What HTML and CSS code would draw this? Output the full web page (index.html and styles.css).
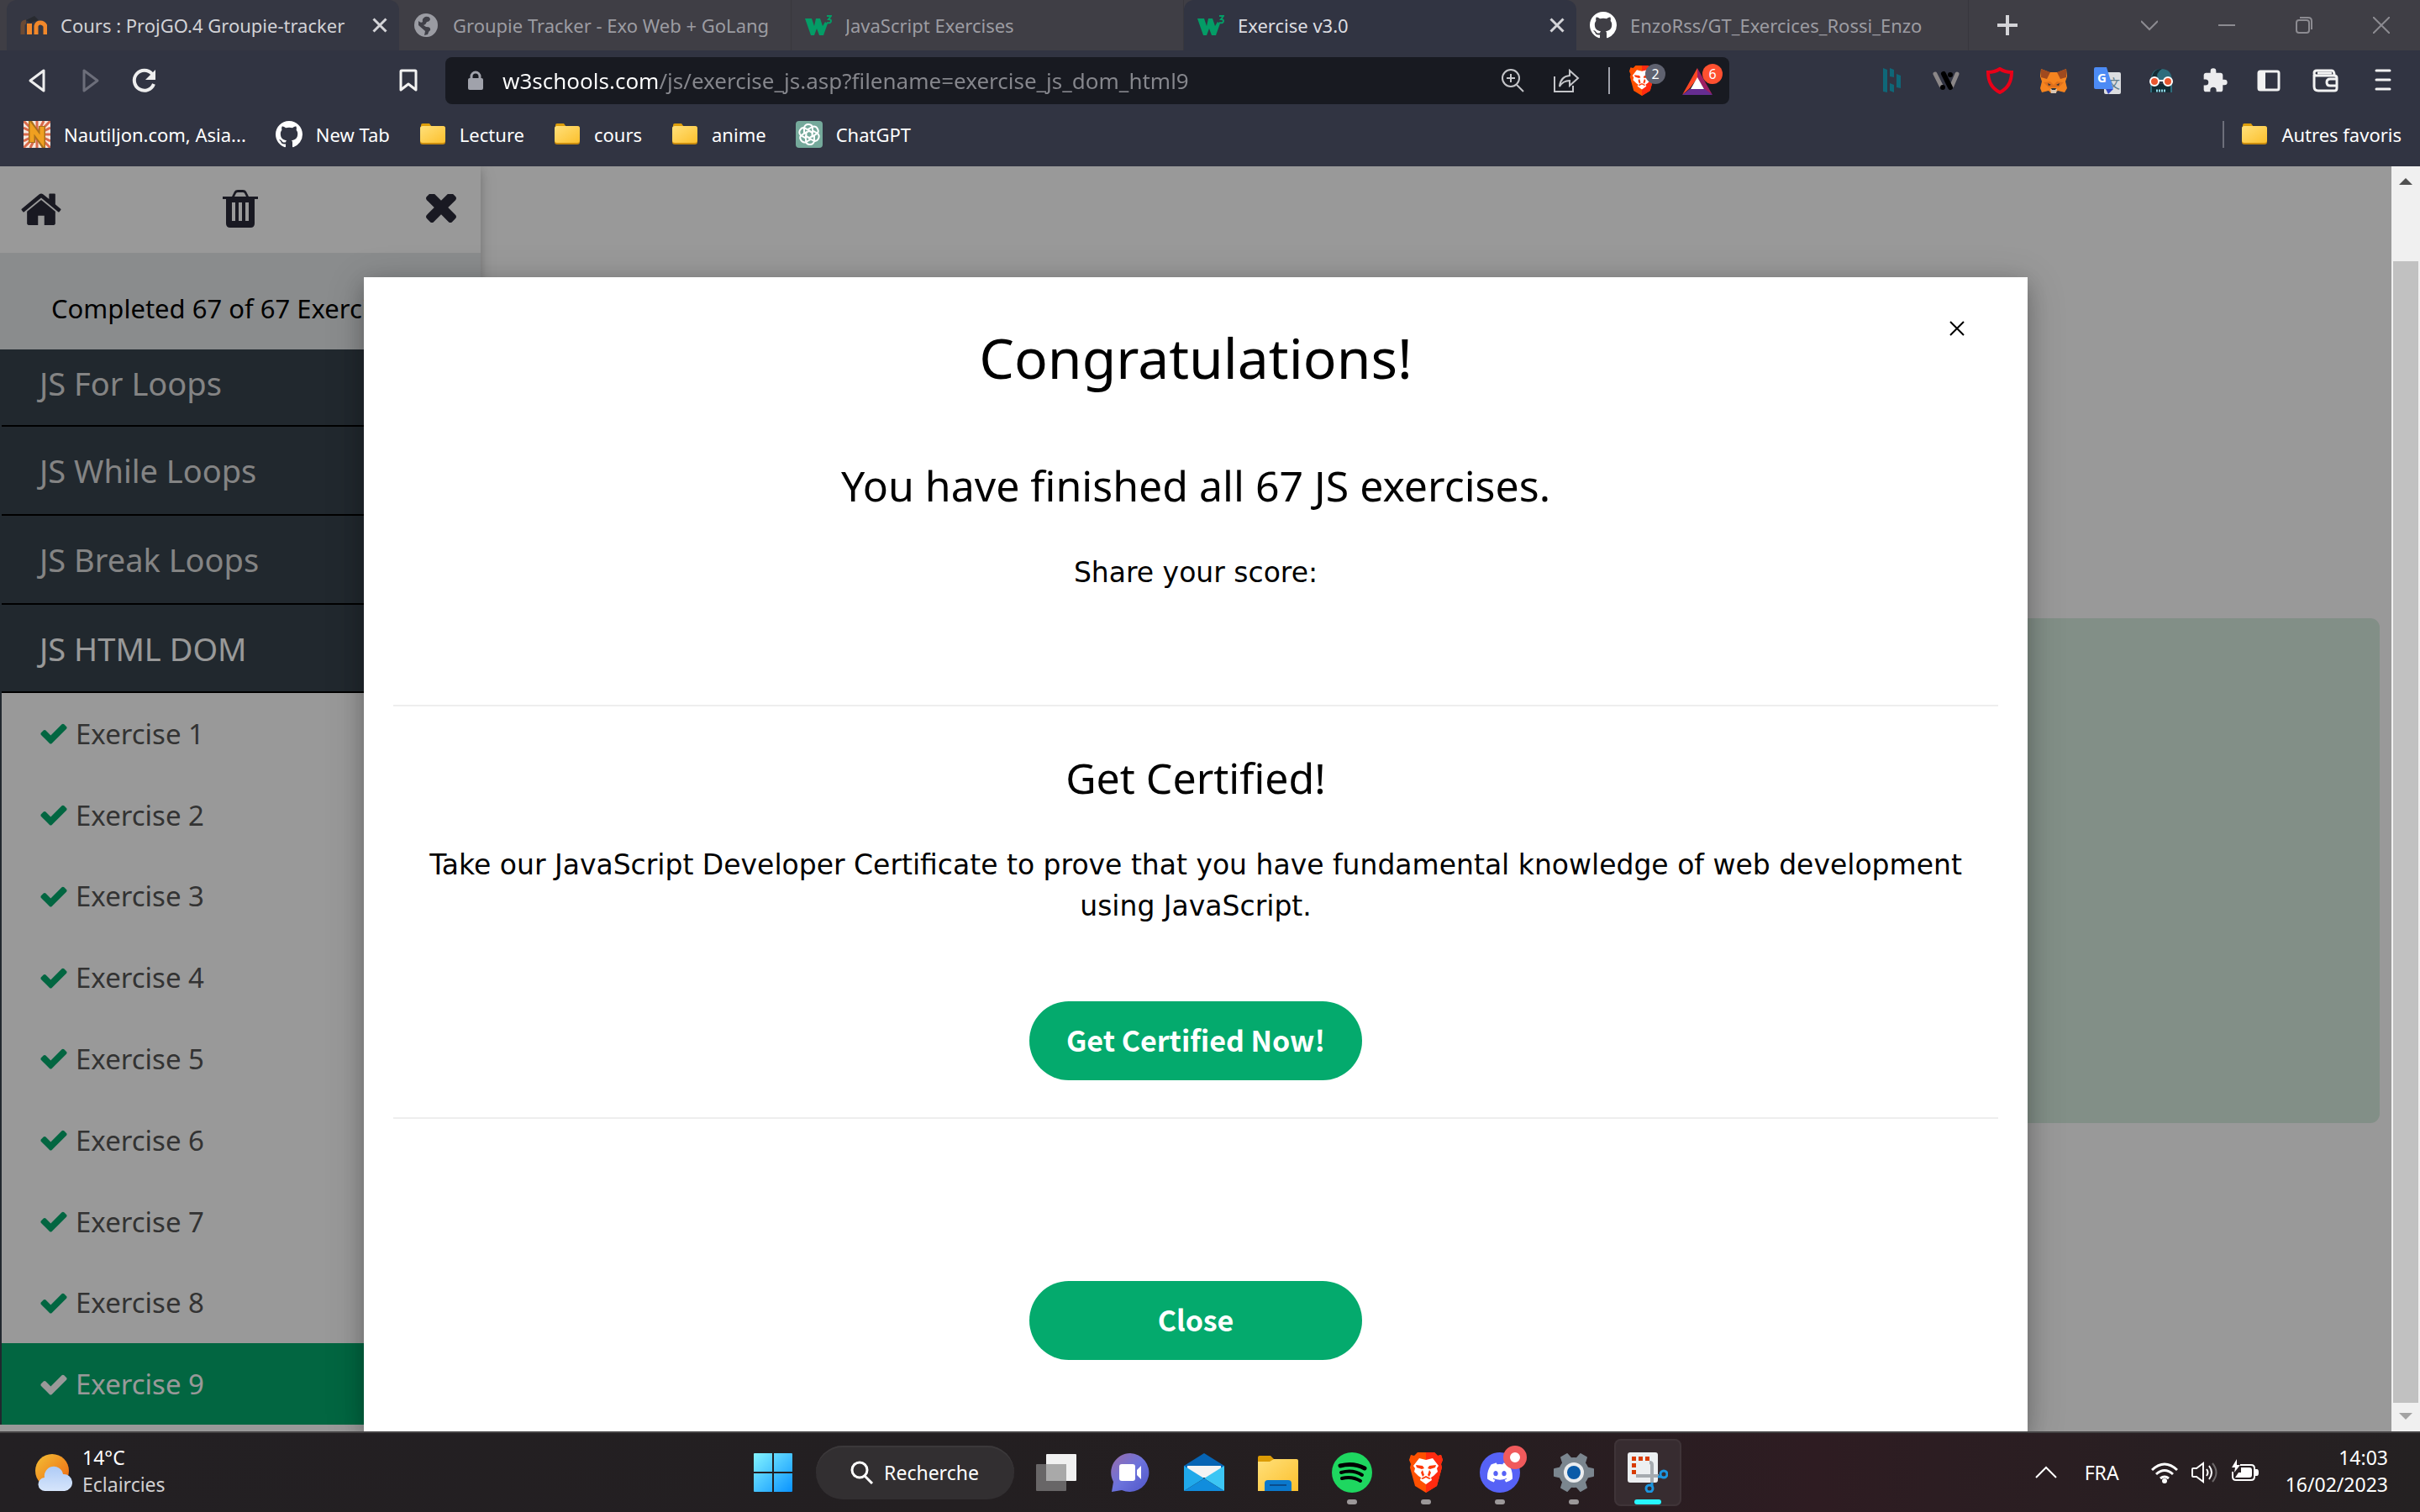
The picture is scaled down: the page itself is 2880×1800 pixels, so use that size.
FILE: index.html
```html
<!DOCTYPE html>
<html lang="en">
<head>
<meta charset="utf-8">
<title>Exercise v3.0</title>
<meta name="viewport" content="width=device-width, initial-scale=1">
<link rel="stylesheet" href="styles.css">
</head>
<body>
<svg class="sprite" aria-hidden="true">
  <defs>
    <linearGradient id="g-folder" x1="0" y1="0" x2="1" y2="1"><stop offset="0" stop-color="#ffe07a"/><stop offset="1" stop-color="#fcc02d"/></linearGradient>
  </defs>
  <symbol id="github" viewBox="0 0 16 16"><path fill="#fff" d="M8 0C3.58 0 0 3.58 0 8c0 3.54 2.29 6.53 5.47 7.59.4.07.55-.17.55-.38 0-.19-.01-.82-.01-1.49-2.01.37-2.53-.49-2.69-.94-.09-.23-.48-.94-.82-1.13-.28-.15-.68-.52-.01-.53.63-.01 1.08.58 1.23.82.72 1.21 1.87.87 2.33.66.07-.52.28-.87.51-1.07-1.78-.2-3.64-.89-3.64-3.95 0-.87.31-1.59.82-2.15-.08-.2-.36-1.02.08-2.12 0 0 .67-.21 2.2.82.64-.18 1.32-.27 2-.27s1.36.09 2 .27c1.53-1.04 2.2-.82 2.2-.82.44 1.1.16 1.92.08 2.12.51.56.82 1.27.82 2.15 0 3.07-1.87 3.75-3.65 3.95.29.25.54.73.54 1.48 0 1.07-.01 1.93-.01 2.2 0 .21.15.46.55.38A8.01 8.01 0 0 0 16 8c0-4.42-3.58-8-8-8z"/></symbol>
  <symbol id="folder" viewBox="0 0 32 32"><path fill="#dc9d0a" d="M2 5q0-2 2-2h8l3 4h-2v6H2z"/><rect x="1" y="6" width="30" height="22" rx="3" fill="#c98c10"/><rect x="1" y="6" width="30" height="20" rx="3" fill="url(#g-folder)"/></symbol>
  <symbol id="w3" viewBox="0 0 32 32"><path fill="#049c66" d="M0 8h8l3 9 2-9h5l3 9 3-5 3 2-5 14h-5l-3-8-3 8H7z"/><path fill="none" stroke="#049c66" stroke-width="2" d="M26 5h5l-3 4q3 0 3 2 0 3-5 2"/></symbol>
  <symbol id="cross" viewBox="0 0 18 18"><path d="M1.500 1.500l15 15m0-15l-15 15" fill="none" stroke="currentColor" stroke-width="3"/></symbol>
  <symbol id="check" viewBox="0 0 1792 1792"><path fill="currentColor" d="M1671 566q0 40-28 68l-724 724-136 136q-28 28-68 28t-68-28l-136-136-362-362q-28-28-28-68t28-68l136-136q28-28 68-28t68 28l294 295 656-657q28-28 68-28t68 28l136 136q28 28 28 68z"/></symbol>
  <symbol id="lion" viewBox="0 0 40 48"><path fill="#ff5000" d="M10 0h20l4 4 4-1 2 6-2 5 1 4-6 22-13 8-13-8L1 18l1-4-2-5 2-6 4 1z"/><path fill="#ff2a10" d="M20 0h10l4 4 4-1 2 6-2 5 1 4-6 22-13 8z"/><path fill="#fff" d="M12 7l8 2 8-2 7 9-2 3 1 4-5 5-3 2 1 3-7 5-7-5 1-3-3-2-5-5 1-4-2-3z"/><path fill="#ff3a08" d="M8 15l8 1 2 3-3 1-6-2zM32 15l-8 1-2 3 3 1 6-2zM14 24l2-3 2 6-2 2zM26 24l-2-3-2 6 2 2zM14 31l6-3 6 3-2 1-4-2-4 2z"/></symbol>
</svg>

<header class="browser">
  <div class="tabstrip" role="tablist">
    <div class="tab tab-hover" role="tab">
      <svg class="i32" viewBox="0 0 32 32"><path d="M3 27V16q0-4 4-4" fill="none" stroke="#6b4a35" stroke-width="5"/><path d="M11 27V14" stroke="#f2882a" stroke-width="6"/><path d="M19 27V17q1-4 5-4t6 4v10" fill="none" stroke="#f2882a" stroke-width="5"/><path d="M7 10l10-5 5 5-10 3z" fill="#282a30"/></svg>
      <span class="tab-title">Cours : ProjGO.4 Groupie-tracker</span>
      <button class="tab-close" aria-label="Close tab"><svg class="i18"><use href="#cross"/></svg></button>
    </div>
    <div class="tab" role="tab">
      <svg class="i32" viewBox="0 0 32 32"><circle cx="16" cy="16" r="14" fill="#9b9ca3"/><path fill="#3f3f47" d="M15 6q5-1 6 3-1 3-4 3-1 3-4 4l3 2q6 0 5 4-2 1-3 5l-4 1 1-5-8-7V11q3 3 5 1-1-4 3-6z"/></svg>
      <span class="tab-title">Groupie Tracker - Exo Web + GoLang</span>
    </div>
    <div class="tab" role="tab">
      <svg class="i32"><use href="#w3"/></svg>
      <span class="tab-title">JavaScript Exercises</span>
    </div>
    <div class="tab tab-active" role="tab" aria-selected="true">
      <svg class="i32"><use href="#w3"/></svg>
      <span class="tab-title">Exercise v3.0</span>
      <button class="tab-close" aria-label="Close tab"><svg class="i18"><use href="#cross"/></svg></button>
    </div>
    <div class="tab" role="tab">
      <svg class="i32"><use href="#github"/></svg>
      <span class="tab-title">EnzoRss/GT_Exercices_Rossi_Enzo</span>
    </div>
    <button class="new-tab" aria-label="New tab"><svg class="i24" viewBox="0 0 24 24"><path d="M12 0v24M0 12h24" stroke="#d4d4d8" stroke-width="4"/></svg></button>
    <div class="window-controls">
      <button aria-label="Search tabs"><svg class="i20" viewBox="0 0 20 20"><path d="M0 5l10 10L20 5"/></svg></button>
      <button aria-label="Minimize"><svg class="i20" viewBox="0 0 20 20"><path d="M0 10h20"/></svg></button>
      <button aria-label="Restore"><svg class="i20" viewBox="0 0 20 20"><rect x="1" y="4" width="15" height="15" rx="3"/><path d="M5 1h10q4 0 4 4v10"/></svg></button>
      <button aria-label="Close window"><svg class="i20" viewBox="0 0 20 20"><path d="M0 0l20 20M20 0L0 20"/></svg></button>
    </div>
  </div>

  <div class="toolbar">
    <div class="nav">
      <button aria-label="Back"><svg class="i32" viewBox="0 0 32 32"><path d="M24 4v24L8 16z" fill="none" stroke="#eee" stroke-width="3" stroke-linejoin="round"/></svg></button>
      <button aria-label="Forward"><svg class="i32" viewBox="0 0 32 32"><path d="M8 4v24l16-12z" fill="none" stroke="#6c6e7a" stroke-width="3" stroke-linejoin="round"/></svg></button>
      <button aria-label="Reload"><svg class="i32" viewBox="0 0 32 32"><path d="M25 8A12 12 0 1 0 27 20" fill="none" stroke="#eee" stroke-width="4"/><path d="M29 3v12H17z" fill="#eee"/></svg></button>
    </div>
    <button class="bookmark-page" aria-label="Bookmark this page"><svg class="i32" viewBox="0 0 32 32"><path d="M7 5q0-1 1-1h16q1 0 1 1v22l-9-7-9 7z" fill="none" stroke="#f2f2f2" stroke-width="3" stroke-linejoin="round"/></svg></button>
    <div class="urlbar">
      <svg class="i24" viewBox="0 0 24 24"><rect x="3" y="9" width="18" height="14" rx="2" fill="#a0a2ab"/><path d="M7 10V7a5 5 0 0 1 10 0v3" fill="none" stroke="#a0a2ab" stroke-width="3"/></svg>
      <input class="url" type="text" aria-label="Address" value="w3schools.com/js/exercise_js.asp?filename=exercise_js_dom_html9">
      <button aria-label="Zoom"><svg class="i32" viewBox="0 0 32 32" fill="none" stroke="#c4c5c9" stroke-width="2"><circle cx="14" cy="13" r="10"/><path d="M21 21l8 8M14 8v10M9 13h10"/></svg></button>
      <button aria-label="Share"><svg class="i32" viewBox="0 0 32 32" fill="none" stroke="#c4c5c9" stroke-width="2"><path d="M2 11v18h22v-7M8 23q1-12 12-13V4l10 9-10 9v-6q-8 0-12 7z"/></svg></button>
      <span class="url-sep"></span>
      <button class="badged" aria-label="Brave Shields"><svg class="lion-small"><use href="#lion"/></svg><span class="badge">2</span></button>
      <button class="badged" aria-label="Brave Rewards"><svg class="i36" viewBox="0 0 36 36"><path fill="#ff4724" d="M18 3v12L9 27 0 35z"/><path fill="#9e1f63" d="M18 3l18 32-9-6-9-14z"/><path fill="#662d91" d="M0 35l9-7h18l9 7z"/><path fill="#fff" d="M18 14l8 14H10z"/></svg><span class="badge badge-red">6</span></button>
    </div>
    <div class="extensions">
      <button aria-label="Extension H"><svg class="i32" viewBox="0 0 32 32" fill="#0f6778"><path d="M5 1l5 2v27l-5-1zM13 1l5 2v9l-5-1zM13 19l5 2v9l-5-2zM21 8l5 2v15l-5-1z"/></svg></button>
      <button aria-label="Extension W"><svg class="i32" viewBox="0 0 32 32"><path d="M3 8l7 14M29 8l-6 14" stroke="#8b8788" stroke-width="5" stroke-linecap="round"/><path d="M13 8l8 16" stroke="#000" stroke-width="6" stroke-linecap="round"/><circle cx="21" cy="9" r="3" /><circle cx="12" cy="24" r="3"/></svg></button>
      <button aria-label="Antivirus"><svg class="i32" viewBox="0 0 32 32"><path d="M16 2q6 4 14 4 0 17-14 24Q2 23 2 6q8 0 14-4z" fill="none" stroke="#e90018" stroke-width="4"/></svg></button>
      <button aria-label="MetaMask"><svg class="i32" viewBox="0 0 32 32"><path fill="#f5841f" d="M1 2l10 4h10l10-4 1 9-2 6 2 8-3 5-8-2-4 3h-4l-3-3-8 2-2-5 2-8-2-6z"/><path fill="#a04a1e" d="M1 2l11 4-4 8-7-2zM31 2L20 6l4 8 7-2z"/><path fill="#e0701c" d="M4 18l8-1 4 4 4-4 8 1-6 6h-12z"/><path fill="#d8c6b4" d="M12 26h8l-1 5h-6z"/><path fill="#28323c" d="M9 19l4 2-3 1zM23 19l-4 2 3 1zM13 25h6l-1 2h-4z"/></svg></button>
      <button aria-label="Translate"><svg class="i32" viewBox="0 0 32 32"><rect x="12" y="6" width="20" height="26" rx="2" fill="#dcdde0"/><text x="16" y="25" font-family="Noto Sans CJK SC" font-size="15" fill="#607d8b">文</text><path fill="#3449c2" d="M14 26h9l-6 6z"/><path fill="#4c8bf5" d="M2 0h13l8 26H2q-2 0-2-2V2q0-2 2-2z"/><text x="4" y="18" font-family="Noto Sans" font-weight="700" font-size="15" fill="#fff">G</text></svg></button>
      <button aria-label="Spy"><svg class="i32" viewBox="0 0 32 32"><path fill="#2e6d7c" d="M4 17Q3 2 16 2t13 15z"/><path fill="#132c35" d="M12 16Q9 6 17 2 6 1 4 16zM3 20h26v10H3z"/><path stroke="#2e6d7c" stroke-width="2" d="M4 20v10M28 20v10"/><circle cx="8" cy="17" r="5" fill="#e9562f" stroke="#fff" stroke-width="2"/><circle cx="24" cy="17" r="5" fill="#e9562f" stroke="#fff" stroke-width="2"/><path stroke="#fff" stroke-width="2" d="M12 16h8"/><path stroke="#8ed5e4" stroke-width="3" stroke-dasharray="2 1" d="M10 28h12"/></svg></button>
      <button aria-label="Extensions"><svg class="i32" viewBox="0 0 24 24"><path fill="#ececee" d="M20.500 11H19V7c0-1.100-.9-2-2-2h-4V3.500a2.500 2.500 0 0 0-5 0V5H4c-1.100 0-2 .9-2 2v3.800h1.500a2.700 2.700 0 0 1 0 5.400H2V20c0 1.100.9 2 2 2h3.800v-1.500a2.700 2.700 0 0 1 5.400 0V22H17c1.100 0 2-.9 2-2v-4h1.500a2.500 2.500 0 0 0 0-5z"/></svg></button>
      <button aria-label="Side panel"><svg class="i32" viewBox="0 0 32 32"><rect x="4" y="5" width="24" height="22" rx="2" fill="none" stroke="#f2f2f2" stroke-width="3"/><path fill="#f2f2f2" d="M4 5h8v22H4z"/></svg></button>
      <button class="spaced" aria-label="Wallet"><svg class="i32" viewBox="0 0 32 32" fill="none" stroke="#f2f2f2" stroke-width="3"><path d="M2 9v14q0 5 5 5h19q3 0 3-3V13q0-3-3-3H5q-3 0-3-3t3-3h18q3 0 3 6"/><path d="M29 14h-8q-4 0-4 4t4 4h8M6 7h17"/></svg></button>
      <button class="spaced" aria-label="Menu"><svg class="i32" viewBox="0 0 32 32"><path d="M8 4h16M8 15h16M8 26h16" stroke="#f2f2f2" stroke-width="3" stroke-linecap="round"/></svg></button>
    </div>
  </div>

  <nav class="bookmarks">
    <a href="#"><svg class="i32" viewBox="0 0 32 32"><rect width="32" height="32" fill="#f6e9de"/><path stroke="#d96a4c" stroke-width="3" d="M0 0l32 32M32 0L0 32M16 0v32M0 16h32M8 0l16 32M24 0L8 32M0 8l32 16M0 24L32 8"/><path fill="none" stroke="#a8701c" stroke-width="8" d="M10 26V7l12 18V6"/><path fill="none" stroke="#f0a020" stroke-width="5" d="M10 25V8l12 16V7"/></svg>Nautiljon.com, Asia...</a>
    <a href="#"><svg class="i32"><use href="#github"/></svg>New Tab</a>
    <a href="#"><svg class="i32"><use href="#folder"/></svg>Lecture</a>
    <a href="#"><svg class="i32"><use href="#folder"/></svg>cours</a>
    <a href="#"><svg class="i32"><use href="#folder"/></svg>anime</a>
    <a href="#"><svg class="i32" viewBox="0 0 32 32"><rect width="32" height="32" rx="4" fill="#75a99b"/><g fill="none" stroke="#fff" stroke-width="2"><path id="petal" d="M16 12l4 2v-5q0-5-5-5-4 0-5 4v7"/><use href="#petal" transform="rotate(60 16 16)"/><use href="#petal" transform="rotate(120 16 16)"/><use href="#petal" transform="rotate(180 16 16)"/><use href="#petal" transform="rotate(240 16 16)"/><use href="#petal" transform="rotate(300 16 16)"/></g></svg>ChatGPT</a>
    <a class="other" href="#"><svg class="i32"><use href="#folder"/></svg>Autres favoris</a>
  </nav>
</header>

<div class="viewport">
  <div class="page">
    <aside class="sidebar">
      <div class="side-tools">
        <button aria-label="Home"><svg class="icon-home" viewBox="89 240 1614 1300"><path d="M1472 992v480q0 26-19 45t-45 19h-384v-384h-256v384h-384q-26 0-45-19t-19-45v-480q0-1 .5-3t.5-3l575-474 575 474q1 2 1 6zm223-69l-62 74q-8 9-21 11h-3q-13 0-21-7l-692-577-692 577q-12 8-24 7-13-2-21-11l-62-74q-8-10-7-23.500t11-21.500l719-599q32-26 76-26t76 26l244 204v-195q0-14 9-23t23-9h192q14 0 23 9t9 23v408l219 182q10 8 11 21.500t-7 23.500z"/></svg></button>
        <button aria-label="Reset progress"><svg class="icon-trash" viewBox="0 0 42 46"><path fill-rule="evenodd" d="M0 8h11l3-6q1-2 4-2h6q3 0 4 2l3 6h11v3h-4v29q0 5-5 5H9q-5 0-5-5V11H0zm14 0h14l-2-4q-1-1-2-1h-6q-1 0-2 1zM11 15v22h4V15zm8 0v22h4V15zm8 0v22h4V15z"/></svg></button>
        <button aria-label="Close menu"><svg class="icon-times" viewBox="302 430 1188 1188"><path d="M1490 1322q0 40-28 68l-136 136q-28 28-68 28t-68-28l-294-294-294 294q-28 28-68 28t-68-28l-136-136q-28-28-28-68t28-68l294-294-294-294q-28-28-28-68t28-68l136-136q28-28 68-28t68 28l294 294 294-294q28-28 68-28t68 28l136 136q28 28 28 68t-28 68l-294 294 294 294q28 28 28 68z"/></svg></button>
      </div>
      <p class="progress">Completed 67 of 67 Exercises:</p>
      <div class="menu">
        <button class="category first">JS For Loops</button>
        <button class="category">JS While Loops</button>
        <button class="category">JS Break Loops</button>
        <button class="category open">JS HTML DOM</button>
        <div class="exercises">
          <a href="#"><svg class="i36"><use href="#check"/></svg>Exercise 1</a>
          <a href="#"><svg class="i36"><use href="#check"/></svg>Exercise 2</a>
          <a href="#"><svg class="i36"><use href="#check"/></svg>Exercise 3</a>
          <a href="#"><svg class="i36"><use href="#check"/></svg>Exercise 4</a>
          <a href="#"><svg class="i36"><use href="#check"/></svg>Exercise 5</a>
          <a href="#"><svg class="i36"><use href="#check"/></svg>Exercise 6</a>
          <a href="#"><svg class="i36"><use href="#check"/></svg>Exercise 7</a>
          <a href="#"><svg class="i36"><use href="#check"/></svg>Exercise 8</a>
          <a class="current" href="#"><svg class="i36"><use href="#check"/></svg>Exercise 9</a>
        </div>
      </div>
    </aside>
    <main class="content"><div class="exercise-window"></div></main>

    <div class="overlay">
      <section class="modal" role="dialog" aria-labelledby="modal-title">
        <button class="modal-x" aria-label="Close"><svg class="i18" viewBox="0 0 18 18"><path d="M1 1l16 16M17 1L1 17" stroke="#000" stroke-width="2"/></svg></button>
        <h1 id="modal-title">Congratulations!</h1>
        <h2>You have finished all 67 JS exercises.</h2>
        <p class="share">Share your score:</p>
        <hr>
        <h2 class="cert-title">Get Certified!</h2>
        <p>Take our JavaScript Developer Certificate to prove that you have fundamental knowledge of web development using JavaScript.</p>
        <button class="pill">Get Certified Now!</button>
        <hr>
        <button class="pill pill-close">Close</button>
      </section>
    </div>
  </div>
  <div class="scrollbar" aria-hidden="true">
    <svg class="arrow" viewBox="0 0 16 8"><path fill="#505050" d="M0 8l8-8 8 8z"/></svg>
    <div class="thumb"></div>
    <svg class="arrow" viewBox="0 0 16 8"><path fill="#a3a3a3" d="M0 0l8 8 8-8z"/></svg>
  </div>
</div>

<footer class="taskbar">
  <button class="weather">
    <svg class="i48" viewBox="0 0 48 48"><defs><linearGradient id="g-sun" x1="0" y1="0" x2="1" y2="1"><stop offset="0" stop-color="#f3bf35"/><stop offset="1" stop-color="#ee6410"/></linearGradient><linearGradient id="g-cloud" x1="0" y1="0" x2="0" y2="1"><stop offset="0" stop-color="#aecbf6"/><stop offset="1" stop-color="#d6e5fb"/></linearGradient></defs><circle cx="24" cy="22" r="20" fill="url(#g-sun)"/><path fill="url(#g-cloud)" d="M16 46a8 8 0 0 1-1-16 11 11 0 0 1 22-4 10 10 0 0 1 2 20z"/></svg>
    <span class="two-line"><b>14°C</b><span>Eclaircies</span></span>
  </button>
  <div class="dock">
    <button class="app" aria-label="Start"><svg class="i48" viewBox="0 0 48 48"><defs><linearGradient id="g-start" gradientUnits="userSpaceOnUse" x1="0" y1="0" x2="48" y2="48"><stop offset="0" stop-color="#86f6ff"/><stop offset="1" stop-color="#0791ff"/></linearGradient></defs><path fill="url(#g-start)" d="M1 2q0-1 1-1h21v22H1zM25 1h21q1 0 1 1v21H25zM1 25h22v22H2q-1 0-1-1zM25 25h22v21q0 1-1 1H25z"/></svg></button>
    <button class="search"><svg class="i28" viewBox="0 0 28 28"><circle cx="11" cy="11" r="9" fill="none" stroke="#fff" stroke-width="3"/><path d="M17 18l9 9" stroke="#fff" stroke-width="3"/></svg>Recherche</button>
    <button class="app" aria-label="Task view"><svg class="i48" viewBox="0 0 48 48"><rect x="12" y="2" width="36" height="32" rx="1" fill="#f1f1f1"/><rect x="0" y="14" width="36" height="32" rx="1" fill="#686667"/><path fill="#a9a9a9" d="M12 14h24v20H12z"/></svg></button>
    <button class="app" aria-label="Chat"><svg class="i48" viewBox="0 0 48 48"><defs><linearGradient id="g-chat" x1="0" y1="0" x2="1" y2="1"><stop offset="0" stop-color="#9a6ba8"/><stop offset=".5" stop-color="#6c73dc"/><stop offset="1" stop-color="#5055c8"/></linearGradient></defs><path fill="url(#g-chat)" d="M24 1a23 23 0 1 1-10 44L2 47l2-12A23 23 0 0 1 24 1z"/><rect x="11" y="14" width="19" height="20" rx="3" fill="#fff"/><path fill="#fff" d="M32 21l5-5v16l-5-5z"/></svg></button>
    <button class="app" aria-label="Mail"><svg class="i48" viewBox="0 0 48 48"><path fill="#0664b4" d="M24 1l24 15v6H0v-6z"/><path fill="#f4f4f4" d="M4 16h40v14H4z"/><path fill="#20a9ea" d="M0 16l24 15L0 46z"/><path fill="#3cc6f4" d="M48 16L24 31l24 15z"/><path fill="#118ddd" d="M0 46l24-15 24 15z"/></svg></button>
    <button class="app" aria-label="File Explorer"><svg class="i48" viewBox="0 0 48 48"><path fill="#dc9b05" d="M0 6q0-2 2-2h13l5 5v6H0z"/><path fill="url(#g-folder)" d="M0 11h14l5-3h27q2 0 2 2v36H0z"/><path fill="#0a78cc" d="M8 46V37q0-4 4-4h24q4 0 4 4v9z"/><path stroke="#0a4c8c" stroke-width="2" d="M14 39h20"/></svg></button>
    <button class="app running" aria-label="Spotify"><svg class="i48" viewBox="0 0 48 48"><circle cx="24" cy="24" r="24" fill="#1ed760"/><path fill="none" stroke="#000" stroke-linecap="round" stroke-width="5" d="M10 16q16-4 29 3"/><path fill="none" stroke="#000" stroke-linecap="round" stroke-width="4" d="M11 24q14-4 25 3M12 31q12-3 22 3"/></svg></button>
    <button class="app running" aria-label="Brave"><svg class="i48"><use href="#lion"/></svg></button>
    <button class="app running" aria-label="Discord"><svg class="i48" viewBox="0 0 48 48"><circle cx="24" cy="24" r="24" fill="#5662f6"/><svg x="9" y="9" width="30" height="30" viewBox="0 0 16 16"><path fill="#fff" d="M13.545 2.907a13.200 13.200 0 0 0-3.257-1.011.05.05 0 0 0-.052.025c-.141.250-.297.577-.406.833a12.200 12.200 0 0 0-3.658 0 8 8 0 0 0-.412-.833.05.05 0 0 0-.052-.025c-1.125.194-2.220.534-3.257 1.011a.04.04 0 0 0-.021.018C.356 6.024-.213 9.047.066 12.032q.003.022.021.037a13.300 13.300 0 0 0 3.995 2.020.05.05 0 0 0 .056-.019q.463-.63.818-1.329a.05.05 0 0 0-.01-.059l-.018-.011a9 9 0 0 1-1.248-.595.05.05 0 0 1-.02-.066l.015-.019q.127-.095.248-.195a.05.05 0 0 1 .051-.007c2.619 1.196 5.454 1.196 8.041 0a.05.05 0 0 1 .053.007q.121.1.248.195a.05.05 0 0 1-.004.085 8 8 0 0 1-1.249.594.05.05 0 0 0-.03.03.05.05 0 0 0 .003.041c.24.465.515.909.817 1.329a.05.05 0 0 0 .056.019 13.200 13.200 0 0 0 4.001-2.020.05.05 0 0 0 .021-.037c.334-3.451-.559-6.449-2.366-9.106a.03.03 0 0 0-.02-.019m-8.198 7.307c-.789 0-1.438-.724-1.438-1.612s.637-1.613 1.438-1.613c.807 0 1.450.73 1.438 1.613 0 .888-.637 1.612-1.438 1.612m5.316 0c-.788 0-1.438-.724-1.438-1.612s.637-1.613 1.438-1.613c.807 0 1.451.73 1.438 1.613 0 .888-.631 1.612-1.438 1.612"/></svg></svg><span class="notify"></span></button>
    <button class="app running" aria-label="Settings"><svg class="i48" viewBox="0 0 48 48"><g fill="#7b868f"><circle cx="24" cy="24" r="18"/><g id="gear-pair"><path d="M0 20q0-1 1-1l9-2v14l-9-2q-1 0-1-1zM48 20q0-1-1-1l-9-2v14l9-2q1 0 1-1z"/></g><use href="#gear-pair" transform="rotate(60 24 24)"/><use href="#gear-pair" transform="rotate(120 24 24)"/></g><circle cx="24" cy="24" r="12" fill="#ebedef"/><circle cx="24" cy="24" r="8" fill="#0a5ba8"/></svg></button>
    <button class="app active" aria-label="Snipping Tool"><svg class="i48" viewBox="0 0 48 48"><rect width="36" height="36" rx="3" fill="#eceff1"/><path fill="#d83b01" d="M5 5h5v5H5zM13 5h5v5h-5zM21 5h5v5h-5zM5 13h5v5H5zM5 21h5v5H5z"/><path fill="none" stroke="#a6abb0" stroke-width="4" d="M26 12q3 0 3 3v21M10 28h27"/><path fill="none" stroke="#1c96e0" stroke-width="3" d="M36 29h4M29 36v4"/><circle cx="43" cy="26" r="4" fill="none" stroke="#1c96e0" stroke-width="3"/><circle cx="26" cy="43" r="4" fill="none" stroke="#1c96e0" stroke-width="3"/></svg></button>
  </div>
  <div class="tray">
    <button aria-label="Show hidden icons"><svg class="i28" viewBox="0 0 28 28"><path d="M2 20L14 8l12 12" fill="none" stroke="#fff" stroke-width="2"/></svg></button>
    <button class="lang">FRA</button>
    <button class="status" aria-label="Network, volume and battery">
      <svg class="i32" viewBox="0 0 32 32" fill="none" stroke="#fff" stroke-width="3"><path d="M1 13q15-14 30 0M6 18q10-9 20 0M11 23q5-4 10 0"/><circle cx="16" cy="26" r="2" fill="#fff" stroke-width="2"/></svg>
      <svg class="i32" viewBox="0 0 32 32" fill="none" stroke="#fff" stroke-width="2"><path d="M1 12q0-1 1-1h4l8-6v22l-8-6H2q-1 0-1-1z"/><path d="M18 12q3 4 0 8M21 8q6 8 0 16"/><path stroke="#6b6768" d="M25 5q9 11 0 22"/></svg>
      <svg class="i32" viewBox="0 0 32 32"><path fill="none" stroke="#fff" stroke-width="2" d="M10 7h13q4 0 4 4v10q0 4-4 4H5q-4 0-4-4v-6"/><path fill="#fff" d="M11 10h10q3 0 3 3v6q0 3-3 3H4l4-6h3zM28 12h2q2 0 2 4t-2 4h-2zM6 0L0 10h4l-1 6 7-9H6z"/></svg>
    </button>
    <button class="two-line clock"><b>14:03</b><b>16/02/2023</b></button>
  </div>
</footer>
</body>
</html>
```
FILE: styles.css
```css
*, *::before, *::after { box-sizing: border-box; }

:root {
  --ui: "Noto Sans", "Open Sans", sans-serif;
  --body: "DejaVu Sans", Verdana, sans-serif;
  --pill: "Noto Sans CJK JP", "Noto Sans", sans-serif;
  --chrome: #313442;
  --green: #04aa6d;
}

body {
  margin: 0;
  height: 100vh;
  display: flex;
  flex-direction: column;
  overflow: hidden;
  font-family: var(--ui);
  font-size: 23px;
  color: #000;
}

button {
  margin: 0;
  padding: 0;
  border: 0;
  background: none;
  font: inherit;
  color: inherit;
}

a { color: inherit; text-decoration: none; }
svg { display: block; flex: none; }
.sprite { position: absolute; width: 0; height: 0; }

.i18 { width: 18px; height: 18px; }
.i20 { width: 20px; height: 20px; }
.i24 { width: 24px; height: 24px; }
.i28 { width: 28px; height: 28px; }
.i32 { width: 32px; height: 32px; }
.i36 { width: 36px; height: 36px; }
.i48 { width: 48px; height: 48px; }

/* Browser chrome */
.browser { background: var(--chrome); color: #fff; font-size: 22px; }

.tabstrip {
  display: flex;
  height: 60px;
  padding-left: 8px;
  background: #3f3e45;
}

.tab {
  display: flex;
  align-items: center;
  gap: 16px;
  flex: 0 1 467px;
  min-width: 0;
  padding: 0 14px 0 16px;
  color: #9c9ca2;
  border-right: 1px solid #38373d;
}

.tab-title { flex: 1; min-width: 0; overflow: hidden; white-space: nowrap; }
.tab-hover { background: #353743; color: #d2d2d6; border-radius: 12px 12px 0 0; border: 0; }
.tab-active { background: var(--chrome); color: #dcdce0; border-radius: 12px 12px 0 0; border: 0; }
.tab-close { color: #d4d4d8; }

.new-tab { padding: 0 34px; }
.window-controls { display: flex; gap: 72px; margin-left: auto; padding-right: 36px; }
.window-controls svg { fill: none; stroke: #8c8b91; stroke-width: 2; }

.toolbar { display: flex; align-items: center; height: 76px; padding: 8px 28px 12px; }
.nav { display: flex; gap: 32px; }
.bookmark-page { margin: 0 28px 0 282px; }
.urlbar {
  display: flex;
  align-items: center;
  flex: 1;
  min-width: 0;
  height: 56px;
  padding: 0 8px 0 24px;
  border-radius: 8px;
  background: #181a21;
}
.url {
  flex: 1;
  min-width: 0;
  margin: 0 28px 0 20px;
  padding: 0;
  border: 0;
  font-family: inherit;
  font-size: 26px;
  line-height: 40px;
  color: transparent;
  background: linear-gradient(90deg, #fff 187px, #86878d 187px);
  background-clip: text;
  -webkit-background-clip: text;
}
.urlbar button + button { margin-left: 32px; }
.url-sep { width: 2px; height: 32px; margin: 0 22px 0 34px; background: #a0a2ab; }
.urlbar .url-sep + .badged { margin: 0; }
.urlbar .badged + .badged { margin-left: 20px; }
.badged { position: relative; padding-right: 12px; }
.lion-small { width: 32px; height: 36px; }
.badge {
  position: absolute;
  top: -2px;
  right: 0;
  width: 24px;
  border-radius: 12px;
  background: #5f6270;
  font-size: 16px;
  line-height: 24px;
  text-align: center;
}
.badge-red { background: #ff5030; }
.extensions { display: flex; gap: 32px; margin-left: 178px; }
.extensions .spaced { margin-left: 4px; }

.bookmarks { display: flex; align-items: center; gap: 35px; height: 62px; padding: 0 22px 14px 28px; }
.bookmarks a { display: flex; align-items: center; gap: 16px; height: 32px; white-space: nowrap; }
.bookmarks .other { margin-left: auto; padding-left: 20px; border-left: 2px solid #6d6f7a; }

/* Web page */
.viewport { flex: 1; min-height: 0; display: flex; background: #fff; }
.page { position: relative; flex: 1; min-width: 0; display: flex; overflow: hidden; }

.sidebar {
  flex: 0 0 572px;
  background: #fff;
  box-shadow: 0 4px 10px rgba(0, 0, 0, .16), 0 4px 20px rgba(0, 0, 0, .12);
}
.side-tools {
  display: grid;
  grid-template-columns: 1fr auto 1fr;
  align-items: center;
  height: 103px;
  padding: 0 29px 2px;
}
.side-tools button:first-child { justify-self: start; margin-left: -4px; }
.side-tools button:last-child { justify-self: end; }
.side-tools svg { fill: #2b2b3a; }
.icon-home { width: 48px; height: 38px; }
.icon-trash { width: 42px; height: 46px; }
.icon-times { width: 36px; height: 36px; }
.progress {
  margin: 0;
  padding: 42px 61px 25px;
  background: #e7e9eb;
  font-size: 31px;
  line-height: 48px;
  white-space: nowrap;
  overflow: hidden;
}

.menu { padding-left: 2px; background: #38444d; }
.category {
  display: block;
  width: 100%;
  height: 106px;
  padding: 0 45px;
  border-bottom: 2px solid #000;
  font-size: 38px;
  line-height: 48px;
  text-align: left;
  color: #ddd;
}
.category.first { height: 92px; padding-bottom: 10px; }
.category.open { color: #fff; height: 105px; }
.exercises { display: grid; grid-auto-rows: 1fr; height: 871px; background: #fff; font-size: 33px; color: #555; }
.exercises a { display: flex; align-items: center; gap: 8px; padding-left: 44px; }
.exercises svg { color: var(--green); }
.exercises .current { background: var(--green); color: #fff; }
.exercises .current svg { color: #fff; }

.content { flex: 1; padding: 538px 14px 0 48px; }
.exercise-window { height: 601px; border-radius: 11px; background: #d9eee1; }

.overlay {
  position: absolute;
  inset: 0;
  padding-top: 132px;
  background: rgba(0, 0, 0, .4);
}
.modal {
  position: relative;
  width: 90%;
  max-width: 1980px;
  min-height: 100%;
  margin: 0 auto;
  padding: 46px 35px 85px;
  background: #fff;
  box-shadow: 0 8px 22px rgba(0, 0, 0, .2), 0 8px 44px rgba(0, 0, 0, .19);
  text-align: center;
}
.modal h1, .modal h2 { margin: 0; font-weight: 400; }
.modal h1 { font-size: 66px; line-height: 98px; }
.modal h2 { margin-top: 66px; font-size: 50px; line-height: 76px; }
.modal .cert-title { margin-top: 47px; }
.modal p { margin: 41px 0 0; font-family: var(--body); font-size: 33px; line-height: 49px; }
.modal hr { height: 2px; margin: 44px 0 0; border: 0; background: #eee; }
.modal .share + hr { margin-top: 133px; }
.modal-x { position: absolute; top: 52px; right: 75px; }
.pill {
  width: 396px;
  height: 94px;
  margin-top: 89px;
  padding-bottom: 2px;
  border-radius: 47px;
  background: var(--green);
  color: #fff;
  font-family: var(--pill);
  font-size: 34px;
  font-weight: 700;
  line-height: 56px;
}
.pill-close { margin-top: 193px; }

.scrollbar {
  display: flex;
  flex-direction: column;
  justify-content: space-between;
  align-items: center;
  width: 34px;
  padding: 14px 2px;
  background: #f0f0f0;
}
.arrow { width: 16px; height: 8px; }
.thumb { flex: 1; align-self: stretch; margin: 91px 0 12px; background: #c1c1c1; }

/* Taskbar */
.taskbar {
  display: grid;
  grid-template-columns: 1fr auto 1fr;
  align-items: center;
  height: 96px;
  padding: 0 38px;
  border-top: 2px solid #454344;
  background: linear-gradient(90deg, #232023 0%, #231f21 40%, #251e20 60%, #2e1c22 75%, #2a1e22 85%, #242122 100%);
  color: #fff;
}
.weather { display: flex; align-items: center; gap: 12px; justify-self: start; }
.two-line { display: flex; flex-direction: column; padding-bottom: 4px; text-align: left; line-height: 32px; color: #d0cfd0; }
.two-line b { font-weight: 400; color: #fff; }
.clock { text-align: right; }

.dock { display: flex; gap: 8px; }
.app { position: relative; display: grid; place-items: center; width: 80px; height: 80px; border-radius: 8px; }
.search {
  display: flex;
  align-items: center;
  justify-content: center;
  gap: 12px;
  width: 236px;
  height: 64px;
  margin: 8px 2px 8px 3px;
  border-radius: 32px;
  background: #322f31;
  box-shadow: inset 0 2px #3b383a;
}
.running::after, .active::after {
  content: "";
  position: absolute;
  left: 34px;
  bottom: 2px;
  width: 12px;
  height: 6px;
  border-radius: 3px;
  background: #9c9899;
}
.active { background: #372c30; box-shadow: inset 0 0 0 2px #3f3438; }
.active::after { left: 24px; width: 32px; background: #27f5ff; }
.notify {
  position: absolute;
  top: 8px;
  right: 8px;
  width: 28px;
  height: 28px;
  border: 8px solid #f05a5c;
  border-radius: 14px;
  background: #fff;
}

.tray { display: flex; align-items: center; justify-self: end; }
.lang { margin: 0 38px 0 32px; }
.status { display: flex; gap: 16px; margin-right: 32px; }
```
